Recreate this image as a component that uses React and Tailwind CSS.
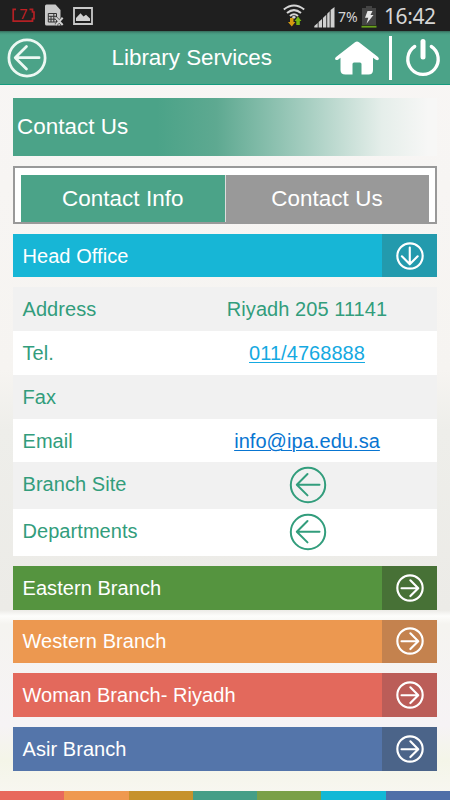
const branches = [
  { name: 'Eastern Branch', bar: 'bg-[#55943f]', side: 'bg-[#477136]' },
  { name: 'Western Branch', bar: 'bg-[#ec9850]', side: 'bg-[#c4824e]' },
  { name: 'Woman Branch- Riyadh', bar: 'bg-[#e3695c]', side: 'bg-[#bb5d58]' },
  { name: 'Asir Branch', bar: 'bg-[#5475aa]', side: 'bg-[#4b6489]' },
]

const stripes = [
  'bg-[#e8695c]', 'bg-[#ef9950]', 'bg-[#c6922c]', 'bg-[#459e87]',
  'bg-[#7aa048]', 'bg-[#12b8d6]', 'bg-[#4f6fa8]',
]

// circle with an arrow, drawn pointing left and rotated by className
function CircleArrow({ size, stroke, className }) {
  return (
    <svg
      width={size} height={size} viewBox="0 0 38 38" fill="none"
      stroke="currentColor" strokeWidth={stroke} strokeLinecap="round" strokeLinejoin="round"
      className={className}
    >
      <circle cx="19" cy="19" r="17.2" />
      <path d="M30.5 18.7H8M18.5 8L7.8 18.7L18.5 29.4" />
    </svg>
  )
}

function StatusBar() {
  return (
    <div className="h-[31px] bg-[#1f1f1f] flex items-center pl-3 pr-[15px] text-[#d6d6d6]">
      <div className="relative w-[23px] h-[15px] flex justify-center">
        <svg width="23" height="15" viewBox="0 0 23 15" fill="none" stroke="#b32024" strokeWidth="1.7" className="absolute inset-0">
          <path d="M4 1.3H1.2V13.2H20.5V10.7H22V4H20.5V1.3H17.5" />
        </svg>
        <span className="text-[14px] leading-[12px] text-[#c32024] font-['Noto_Sans',sans-serif]">7</span>
      </div>
      <svg width="19" height="23" viewBox="0 0 19 23" className="ml-[10px]">
        <path d="M0 2Q0 0.5 1.5 0.5H10.5L15.5 6V21.5H1.5Q0 21.5 0 20Z" fill="#c9c9c9" />
        <path d="M3.3 9.5H11.5V18H3.3ZM3.3 12.3H11.5M3.3 15.2H11.5M6 12V18M8.8 9.5V18" stroke="#333" strokeWidth="1" fill="none" />
        <path d="M10.7 13.7L17.7 21M17.7 13.7L10.7 21" stroke="#1f1f1f" strokeWidth="3" />
        <path d="M10.7 13.7L17.7 21M17.7 13.7L10.7 21" stroke="#d0d0d0" strokeWidth="2.1" />
      </svg>
      <svg width="20" height="18" viewBox="0 0 20 18" className="ml-[9px]">
        <path d="M1 1H19V17H1Z" fill="none" stroke="#c9c9c9" strokeWidth="1.8" />
        <path d="M3 14V11L7.5 6.2L10.5 9.5L13 7.7L17 11.5V14Z" fill="#d0d0d0" />
      </svg>

      <svg width="22" height="23" viewBox="0 0 22 23" className="ml-auto">
        <g fill="none" stroke="#d6d6d6" strokeWidth="2">
          <path d="M0.8 5.5Q11 -2.5 21.2 5.5" />
          <path d="M4 9Q11 3.2 18 9" />
          <path d="M7 12Q11 8.6 15 12" />
        </g>
        <path d="M8.5 13L11 11.8L13 13L11 15Z" fill="#d6d6d6" />
        <path d="M7 14H10.5V18H12.3L8.8 22.6L5 18H7Z" fill="#d49a10" />
        <path d="M13.3 21H16.8V17H18.4L15 12.6L11.6 17H13.3Z" fill="#76b710" />
      </svg>
      <svg width="21" height="21" viewBox="0 0 21 21" className="ml-[9px] mt-[3px]" fill="#d0d0d0">
        <path d="M0.3 20.5V19L3.7 16V20.5ZM4.6 20.5V15L8 12V20.5ZM8.9 20.5V11L12.3 7.8V20.5ZM13.2 20.5V6.7L15.7 4.3V20.5ZM16.6 20.5V3L20.5 0V20.5Z" />
      </svg>
      <span className="ml-[3px] mt-[2px] w-[21px] text-[14px] leading-[20px] whitespace-nowrap font-['Noto_Sans',sans-serif] tracking-[-0.1px]">7%</span>
      <svg width="16" height="22" viewBox="0 0 16 22" className="ml-[2px] mt-[2px]">
        <path d="M5 0H11V2H15V19H1V2H5Z" fill="#444" />
        <path d="M0.5 19.8H15.5V21.6H0.5Z" fill="#68a31b" />
        <path d="M6.5 5H11.5L9.5 9H12.5L5.5 17.8L7.3 11.7H4Z" fill="#e6e6e6" />
      </svg>
      <span className="ml-[7px] w-[51px] text-[21px] leading-[22px] whitespace-nowrap font-['Noto_Sans',sans-serif] tracking-[-0.4px]">16:42</span>
    </div>
  )
}

function Header() {
  return (
    <div className="h-[54px] shrink-0 bg-[linear-gradient(180deg,#356c5c_0px,#46957d_2px,#4ba388_4px)] border-b border-[#159b7e] flex items-center pl-[7px] pr-[9px] text-white">
      <CircleArrow size={40} stroke={2.6} className="text-[#edf8f3]" />
      <h1 className="ml-[64.5px] w-[170px] text-[22.4px] leading-[26px] whitespace-nowrap">Library Services</h1>
      <svg width="46" height="34" viewBox="0 0 46 34" fill="#fff" className="ml-[52.5px] mt-px">
        <path d="M23 0.5Q24 0.5 25 1.3L44 16Q45.5 17.5 44.5 18.7Q43.3 19.6 41.8 18.7L39 16.7V29Q39 33.5 34.5 33.5H27.5V23Q27.5 21.5 26 21.5H20Q18.5 21.5 18.5 23V33.5H11.5Q6.5 33.5 6.5 29V16.7L4 18.7Q2.5 19.6 1.3 18.5Q0.5 17.3 2 16L21 1.3Q22 0.5 23 0.5Z" />
      </svg>
      <div className="ml-[8.5px] w-[3px] h-[44px] bg-white" />
      <svg width="36" height="40" viewBox="0 0 36 40" fill="none" stroke="#fff" strokeLinecap="round" className="ml-auto">
        <path d="M9.7 8.5A15.2 15.2 0 1 0 26.3 8.5" strokeWidth="3.3" />
        <path d="M18 3.5V19" strokeWidth="5" />
      </svg>
    </div>
  )
}

function BranchBar({ name, bar, side, open }) {
  return (
    <div className={`h-[43.7px] flex items-stretch text-white ${bar}`}>
      <div className="flex-1 pl-[10px] flex items-center">{name}</div>
      <div className={`w-[55px] flex items-center justify-center ${side}`}>
        <CircleArrow size={28} stroke={2.9} className={open ? '-rotate-90' : 'rotate-180'} />
      </div>
    </div>
  )
}

function Row({ label, className, children }) {
  return (
    <div className={`flex pl-[10px] ${className}`}>
      <div className="w-[167.5px] pt-[11px] leading-[23px]">{label}</div>
      <div className="w-[234px] pt-[11px] leading-[23px] text-center">{children}</div>
    </div>
  )
}

export default function App() {
  return (
    <div className="w-[450px] h-[800px] overflow-hidden flex flex-col font-['Liberation_Sans',Arial,sans-serif] bg-[linear-gradient(180deg,#f8f6f5_0px,#f6f4f1_370px,#eeeeea_430px,#ecebe7_610px,#fdfdfb_616px,#f5f4f0_624px,#f6f3f5_725px,#f4f5e8_760px,#f8f7f2_800px)]">
      <StatusBar />
      <Header />

      <div className="pl-[12.5px] pr-[13px] pt-[13.2px] text-[20px] tracking-[0.06px]">
        <div className="h-[57.5px] pl-[4.5px] flex items-center text-white text-[22.4px] bg-[linear-gradient(90deg,#4ba388_0%,#4ba388_34%,#5ea991_48%,#a8cfc2_70%,#e5eeea_87%,#f7f7f6_98%)]">
          Contact Us
        </div>

        <div className="mt-[10px] h-[58px] flex bg-white border-2 border-[#999] pt-[7px] px-[6.5px] text-white text-[22.4px] leading-[47px] text-center">
          <div className="flex-1 bg-[#4ba388]">Contact Info</div>
          <div className="w-px bg-[#ddd]" />
          <div className="w-[203px] bg-[#999]">Contact Us</div>
        </div>

        <div className="mt-[10.1px]">
          <BranchBar name="Head Office" bar="bg-[#17b6d6]" side="bg-[#239aad]" open />
        </div>

        <div className="mt-[10px] text-[#329d7c]">
          <Row label="Address" className="h-[43.7px] bg-[#f1f1f1]">Riyadh 205 11141</Row>
          <Row label="Tel." className="h-[43.8px] bg-white">
            <a className="text-[#15a9e1] underline underline-offset-2 decoration-1">011/4768888</a>
          </Row>
          <Row label="Fax" className="h-[43.7px] bg-[#f1f1f1]" />
          <Row label="Email" className="h-[43.7px] bg-white">
            <a className="text-[#0875d1] underline underline-offset-2 decoration-1">info@ipa.edu.sa</a>
          </Row>
          <Row label="Branch Site" className="h-[46.8px] bg-[#f1f1f1]">
            <CircleArrow size={38} stroke={2} className="mx-auto -mt-[7px] translate-x-px" />
          </Row>
          <Row label="Departments" className="h-[46.8px] bg-white">
            <CircleArrow size={38} stroke={2} className="mx-auto -mt-[7px] translate-x-px" />
          </Row>
        </div>

        <div className="mt-[10px] flex flex-col gap-[10px]">
          {branches.map(b => (
            <BranchBar key={b.name} name={b.name} bar={b.bar} side={b.side} />
          ))}
        </div>
      </div>

      <div className="mt-auto h-[9px] flex">
        {stripes.map(c => (
          <div key={c} className={`flex-1 ${c}`} />
        ))}
      </div>
    </div>
  )
}
